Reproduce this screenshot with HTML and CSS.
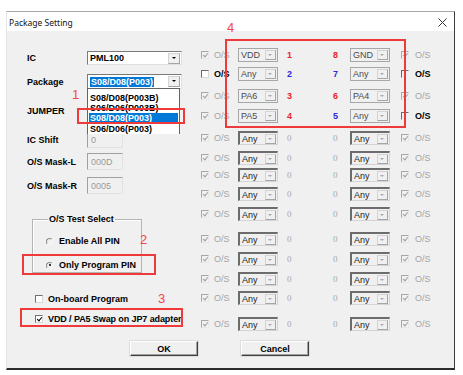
FILE: index.html
```html
<!DOCTYPE html>
<html lang="en">
<head>
    <meta charset="UTF-8">
    <title>Package Setting</title>
    <link rel="stylesheet" href="styles.css">
</head>
<body>
    <div class="window">
        <div class="titlebar">
            <span class="title">Package Setting</span>
            <svg class="close" width="9" height="9" viewBox="0 0 9 9"><path d="M0.5 0.5L8.5 8.5M8.5 0.5L0.5 8.5" stroke="#333" stroke-width="1"/></svg>
        </div>
        <div class="dialog">
            <div class="main">
                <div class="left">
                    <div class="frow r-ic">
                        <span class="lbl">IC</span>
                        <div class="combo white wide"><span class="val">PML100</span><span class="arrow dark"></span></div>
                    </div>
                    <div class="frow r-pkg">
                        <span class="lbl">Package</span>
                        <div class="combo white wide"><span class="val"><span class="sel-text">S08/D08(P003)</span></span><span class="arrow dark"></span></div>
                    </div>
                    <div class="frow r-jumper">
                        <span class="lbl">JUMPER</span>
                    </div>
                    <div class="frow r-shift">
                        <span class="lbl">IC Shift</span>
                        <div class="edit">0</div>
                    </div>
                    <div class="frow r-maskl">
                        <span class="lbl">O/S Mask-L</span>
                        <div class="edit">000D</div>
                    </div>
                    <div class="frow r-maskr">
                        <span class="lbl">O/S Mask-R</span>
                        <div class="edit">0005</div>
                    </div>
                    <fieldset class="group">
                        <legend>O/S Test Select</legend>
                        <div class="opt"><span class="radio"></span>Enable All PIN</div>
                        <div class="opt opt-2"><span class="radio on"></span>Only Program PIN</div>
                    </fieldset>
                    <div class="check-row r-onboard"><span class="box"></span>On-board Program</div>
                    <div class="check-row r-swap"><span class="box ticked"></span>VDD / PA5 Swap on JP7 adapter</div>
                </div>

                <div class="pins">
                    <div class="pin-row">
                        <span class="cb dis"></span><span class="os">O/S</span>
                        <div class="combo"><span class="val">VDD</span><span class="arrow"></span></div>
                        <span class="num red">1</span><span class="num red">8</span>
                        <div class="combo"><span class="val">GND</span><span class="arrow"></span></div>
                        <span class="cb dis"></span><span class="os">O/S</span>
                    </div>
                    <div class="pin-row">
                        <span class="cb open"></span><span class="os on">O/S</span>
                        <div class="combo"><span class="val">Any</span><span class="arrow"></span></div>
                        <span class="num blue">2</span><span class="num blue">7</span>
                        <div class="combo"><span class="val">Any</span><span class="arrow"></span></div>
                        <span class="cb half"></span><span class="os on">O/S</span>
                    </div>
                    <div class="pin-row">
                        <span class="cb dis"></span><span class="os">O/S</span>
                        <div class="combo"><span class="val">PA6</span><span class="arrow"></span></div>
                        <span class="num red">3</span><span class="num red">6</span>
                        <div class="combo"><span class="val">PA4</span><span class="arrow"></span></div>
                        <span class="cb dis"></span><span class="os">O/S</span>
                    </div>
                    <div class="pin-row">
                        <span class="cb dis"></span><span class="os">O/S</span>
                        <div class="combo"><span class="val">PA5</span><span class="arrow"></span></div>
                        <span class="num red">4</span><span class="num blue">5</span>
                        <div class="combo"><span class="val">Any</span><span class="arrow"></span></div>
                        <span class="cb half"></span><span class="os on">O/S</span>
                    </div>
                    <div class="pin-row">
                        <span class="cb dis"></span><span class="os">O/S</span>
                        <div class="combo sunk"><span class="val">Any</span><span class="arrow"></span></div>
                        <span class="num">0</span><span class="num">0</span>
                        <div class="combo sunk"><span class="val">Any</span><span class="arrow"></span></div>
                        <span class="cb dis"></span><span class="os">O/S</span>
                    </div>
                    <div class="pin-row">
                        <span class="cb dis"></span><span class="os">O/S</span>
                        <div class="combo sunk"><span class="val">Any</span><span class="arrow"></span></div>
                        <span class="num">0</span><span class="num">0</span>
                        <div class="combo sunk"><span class="val">Any</span><span class="arrow"></span></div>
                        <span class="cb dis"></span><span class="os">O/S</span>
                    </div>
                    <div class="pin-row">
                        <span class="cb dis"></span><span class="os">O/S</span>
                        <div class="combo sunk"><span class="val">Any</span><span class="arrow"></span></div>
                        <span class="num">0</span><span class="num">0</span>
                        <div class="combo sunk"><span class="val">Any</span><span class="arrow"></span></div>
                        <span class="cb dis"></span><span class="os">O/S</span>
                    </div>
                    <div class="pin-row">
                        <span class="cb dis"></span><span class="os">O/S</span>
                        <div class="combo sunk"><span class="val">Any</span><span class="arrow"></span></div>
                        <span class="num">0</span><span class="num">0</span>
                        <div class="combo sunk"><span class="val">Any</span><span class="arrow"></span></div>
                        <span class="cb dis"></span><span class="os">O/S</span>
                    </div>
                    <div class="pin-row">
                        <span class="cb dis"></span><span class="os">O/S</span>
                        <div class="combo sunk"><span class="val">Any</span><span class="arrow"></span></div>
                        <span class="num">0</span><span class="num">0</span>
                        <div class="combo sunk"><span class="val">Any</span><span class="arrow"></span></div>
                        <span class="cb dis"></span><span class="os">O/S</span>
                    </div>
                    <div class="pin-row">
                        <span class="cb dis"></span><span class="os">O/S</span>
                        <div class="combo sunk"><span class="val">Any</span><span class="arrow"></span></div>
                        <span class="num">0</span><span class="num">0</span>
                        <div class="combo sunk"><span class="val">Any</span><span class="arrow"></span></div>
                        <span class="cb dis"></span><span class="os">O/S</span>
                    </div>
                    <div class="pin-row">
                        <span class="cb dis"></span><span class="os">O/S</span>
                        <div class="combo sunk"><span class="val">Any</span><span class="arrow"></span></div>
                        <span class="num">0</span><span class="num">0</span>
                        <div class="combo sunk"><span class="val">Any</span><span class="arrow"></span></div>
                        <span class="cb dis"></span><span class="os">O/S</span>
                    </div>
                    <div class="pin-row">
                        <span class="cb dis"></span><span class="os">O/S</span>
                        <div class="combo sunk"><span class="val">Any</span><span class="arrow"></span></div>
                        <span class="num">0</span><span class="num">0</span>
                        <div class="combo sunk"><span class="val">Any</span><span class="arrow"></span></div>
                        <span class="cb dis"></span><span class="os">O/S</span>
                    </div>
                    <div class="pin-row">
                        <span class="cb dis"></span><span class="os">O/S</span>
                        <div class="combo sunk"><span class="val">Any</span><span class="arrow"></span></div>
                        <span class="num">0</span><span class="num">0</span>
                        <div class="combo sunk"><span class="val">Any</span><span class="arrow"></span></div>
                        <span class="cb dis"></span><span class="os">O/S</span>
                    </div>
                    <div class="pin-row">
                        <span class="cb dis"></span><span class="os">O/S</span>
                        <div class="combo sunk"><span class="val">Any</span><span class="arrow"></span></div>
                        <span class="num">0</span><span class="num">0</span>
                        <div class="combo sunk"><span class="val">Any</span><span class="arrow"></span></div>
                        <span class="cb dis"></span><span class="os">O/S</span>
                    </div>
                </div>
            </div>

            <div class="buttons">
                <button class="btn">OK</button>
                <button class="btn">Cancel</button>
            </div>
        </div>
    </div>

    <!-- open dropdown of the Package combo -->
    <ul class="droplist">
        <li>S08/D08(P003B)</li>
        <li>S06/D06(P003B)</li>
        <li class="hl">S08/D08(P003)</li>
        <li>S06/D06(P003)</li>
    </ul>

    <!-- red annotations -->
    <div class="mark mark-1"></div>
    <div class="mark mark-2"></div>
    <div class="mark mark-3"></div>
    <div class="mark mark-4"></div>
    <span class="tag tag-1">1</span>
    <span class="tag tag-2">2</span>
    <span class="tag tag-3">3</span>
    <span class="tag tag-4">4</span>
</body>
</html>
```

FILE: styles.css
```css
body{
    margin: 0;
    background: #ffffff;
    font-family: "Liberation Sans", Arial, sans-serif;
    font-size: 9px;
    color: #000000;
    position: relative;
    height: 375px;
    overflow: hidden;
}

.window{
    box-sizing: border-box;
    margin: 11px 0 0 6px;
    width: 449px;
    height: 359px;
    border-top: 1px solid #a8a8a8;
    border-left: 1px solid #e4e4e4;
    border-right: 1px solid #3c3c3c;
    border-bottom: 2px solid #2c2c2c;
    display: flex;
    flex-direction: column;
}

.titlebar{
    height: 18px;
    background: #ffffff;
    display: flex;
    align-items: center;
    justify-content: space-between;
    padding: 1px 7px 0 2px;
    flex-shrink: 0;
}

.title{
    font-family: "Noto Sans", "Liberation Sans", sans-serif;
    font-size: 8.5px;
    color: #111111;
}

.dialog{
    flex: 1;
    background: #f0f0f0;
}

.main{
    display: flex;
}

/* left side form */

.left{
    width: 193px;
    padding: 20px 0 0 20px;
    box-sizing: border-box;
}

.frow{
    display: flex;
    align-items: center;
}

.lbl{
    width: 60px;
    font-weight: 700;
}

.r-ic{ height: 14px; }
.r-pkg{ height: 15px; margin-top: 9px; }
.r-jumper{ height: 12px; margin-top: 16px; }
.r-shift{ height: 17px; margin-top: 14px; }
.r-maskl{ height: 17px; margin-top: 5px; }
.r-maskr{ height: 17px; margin-top: 7px; }

.edit{
    box-sizing: border-box;
    width: 36px;
    height: 17px;
    border: 1px solid #a0a0a0;
    border-right-color: #e2e2e2;
    border-bottom-color: #e2e2e2;
    color: #9a9a9a;
    padding: 3px 0 0 3px;
}

.group{
    margin: 20px 0 0 5px;
    width: 110px;
    height: 59px;
    box-sizing: border-box;
    padding: 0 0 0 13px;
    border: 1px solid #b4b4b4;
    box-shadow: inset 1px 1px 0 #ffffff;
}

.group legend{
    font-weight: 700;
    padding: 0 1px;
    margin-left: 2px;
}

.opt{
    display: flex;
    align-items: center;
    font-weight: 700;
    height: 12px;
    margin-top: 11px;
}

.opt-2{
    margin-top: 12px;
}

.radio{
    box-sizing: border-box;
    width: 7px;
    height: 7px;
    border-radius: 50%;
    border: 1px solid #8a8a8a;
    border-right-color: #f8f8f8;
    border-bottom-color: #f8f8f8;
    margin-right: 6px;
    position: relative;
}

.radio.on::after{
    content: "";
    position: absolute;
    left: 1.5px;
    top: 1.5px;
    width: 2px;
    height: 2px;
    border-radius: 50%;
    background: #000000;
}

.check-row{
    display: flex;
    align-items: center;
    height: 12px;
    font-weight: 700;
    padding-left: 8px;
}

.r-onboard{ margin-top: 20px; }
.r-swap{ margin-top: 8px; letter-spacing: -0.1px; }

.box{
    box-sizing: border-box;
    width: 8px;
    height: 8px;
    background: #ffffff;
    border: 1px solid #707070;
    border-right-color: #d8d8d8;
    border-bottom-color: #d8d8d8;
    margin-right: 5px;
    position: relative;
}

.box.ticked::after,
.cb.dis::after{
    content: "";
    position: absolute;
    left: 2px;
    top: 0px;
    width: 2px;
    height: 4px;
    border-right: 1px solid #000000;
    border-bottom: 1px solid #000000;
    transform: rotate(40deg);
}

/* combo boxes */

.combo{
    box-sizing: border-box;
    width: 40px;
    height: 14px;
    display: flex;
    align-items: center;
    border: 1px solid #a6a6a6;
    background: #f0f0f0;
    color: #4a4a4a;
}

.combo .val{
    flex: 1;
    padding-left: 2px;
    white-space: nowrap;
    overflow: hidden;
}

.combo.sunk{
    border-color: #6c6c6c #d4d4d4 #d4d4d4 #6c6c6c;
    border-width: 2px 1px 1px 2px;
    color: #222222;
}

.combo.white{
    background: #ffffff;
    border-color: #7a7a7a #e0e0e0 #e0e0e0 #7a7a7a;
    color: #000000;
    font-weight: 700;
}

.combo.wide{
    width: 95px;
    height: 14px;
}

.r-pkg .combo.wide{
    height: 15px;
}

.sel-text{
    background: #0078d7;
    color: #ffffff;
    padding: 0 1px;
}

.arrow{
    box-sizing: border-box;
    width: 11px;
    height: 10px;
    margin-right: 1px;
    border: 1px solid #d4d4d4;
    border-right-color: #a4a4a4;
    border-bottom-color: #a4a4a4;
    position: relative;
}

.arrow::after{
    content: "";
    position: absolute;
    left: 2px;
    top: 3px;
    border-left: 2px solid transparent;
    border-right: 2px solid transparent;
    border-top: 2px solid #a8a8a8;
}

.arrow.dark{
    width: 12px;
    height: 11px;
    background: #f0f0f0;
}

.arrow.dark::after{
    border-top-color: #000000;
    left: 3px;
}

/* pin grid */

.pins{
    padding-top: 17px;
    display: grid;
    grid-template-rows: 19px 22px 20px 22px 20px 17px 19px 20px 25px 20px 20px 19px 26px 14px;
}

.pin-row{
    display: grid;
    grid-template-columns: 14px 24px 40px 50px 22px 40px 25px 30px;
    align-items: center;
    height: 14px;
}

.cb{
    box-sizing: border-box;
    width: 8px;
    height: 8px;
    margin-left: 1px;
    position: relative;
    border: 1px solid #a8a8a8;
    border-right-color: #e8e8e8;
    border-bottom-color: #e8e8e8;
}

.pin-row .cb:nth-child(7){
    margin-left: 11px;
}

.cb.dis::after{
    border-color: #a0a0a0;
}

.cb.open{
    background: #ffffff;
    border-color: #6a6a6a #d8d8d8 #d8d8d8 #6a6a6a;
}

.cb.half{
    border-color: #6a6a6a #f0f0f0 #f0f0f0 #6a6a6a;
}

.os{
    color: #a4a4a4;
}

.os.on{
    color: #000000;
    font-weight: 700;
}

.num{
    color: #a8a8a8;
    font-family: "Liberation Serif", serif;
    padding-left: 9px;
}

.pin-row .num + .num{
    padding-left: 5px;
}

.num.red{
    color: #e8242a;
    font-family: "Liberation Sans", Arial, sans-serif;
    font-weight: 700;
}

.num.blue{
    color: #2a2ae0;
    font-family: "Liberation Sans", Arial, sans-serif;
    font-weight: 700;
}

/* buttons */

.buttons{
    display: flex;
    gap: 43px;
    padding-left: 123px;
    margin-top: 10px;
}

.btn{
    box-sizing: border-box;
    width: 68px;
    height: 15px;
    padding: 0;
    font-family: "Liberation Sans", Arial, sans-serif;
    font-size: 9px;
    font-weight: 700;
    background: #f0f0f0;
    border: 1px solid #ffffff;
    border-right-color: #404040;
    border-bottom-color: #404040;
    box-shadow: inset -1px -1px 0 #a0a0a0, 0 0 0 0.5px #c8c8c8;
}

/* dropdown list, drawn over the form */

.droplist{
    position: absolute;
    left: 87px;
    top: 88px;
    width: 93px;
    height: 46px;
    box-sizing: border-box;
    margin: 0;
    padding: 4px 0 0 1px;
    list-style: none;
    background: #ffffff;
    border: 1px solid #646464;
    border-bottom: none;
    overflow: hidden;
    font-weight: 700;
}

.droplist li{
    height: 10px;
    line-height: 10px;
    padding-left: 1px;
    white-space: nowrap;
}

.droplist li.hl{
    background: #0078d7;
    color: #ffffff;
    height: 11px;
    line-height: 11px;
    margin-top: 0;
    margin-right: 1px;
}

/* annotations */

.mark{
    position: absolute;
    box-sizing: border-box;
    border: 2px solid #ee3a3a;
}

.mark-1{ left: 77px; top: 108px; width: 108px; height: 16px; }
.mark-2{ left: 22px; top: 254px; width: 134px; height: 21px; }
.mark-3{ left: 20px; top: 308px; width: 163px; height: 19px; }
.mark-4{ left: 225px; top: 39px; width: 181px; height: 89px; }

.tag{
    position: absolute;
    color: #f04848;
    font-size: 13px;
    line-height: 13px;
}

.tag-1{ left: 72px; top: 88px; }
.tag-2{ left: 140px; top: 233px; }
.tag-3{ left: 158px; top: 292px; }
.tag-4{ left: 227px; top: 21px; }
```
